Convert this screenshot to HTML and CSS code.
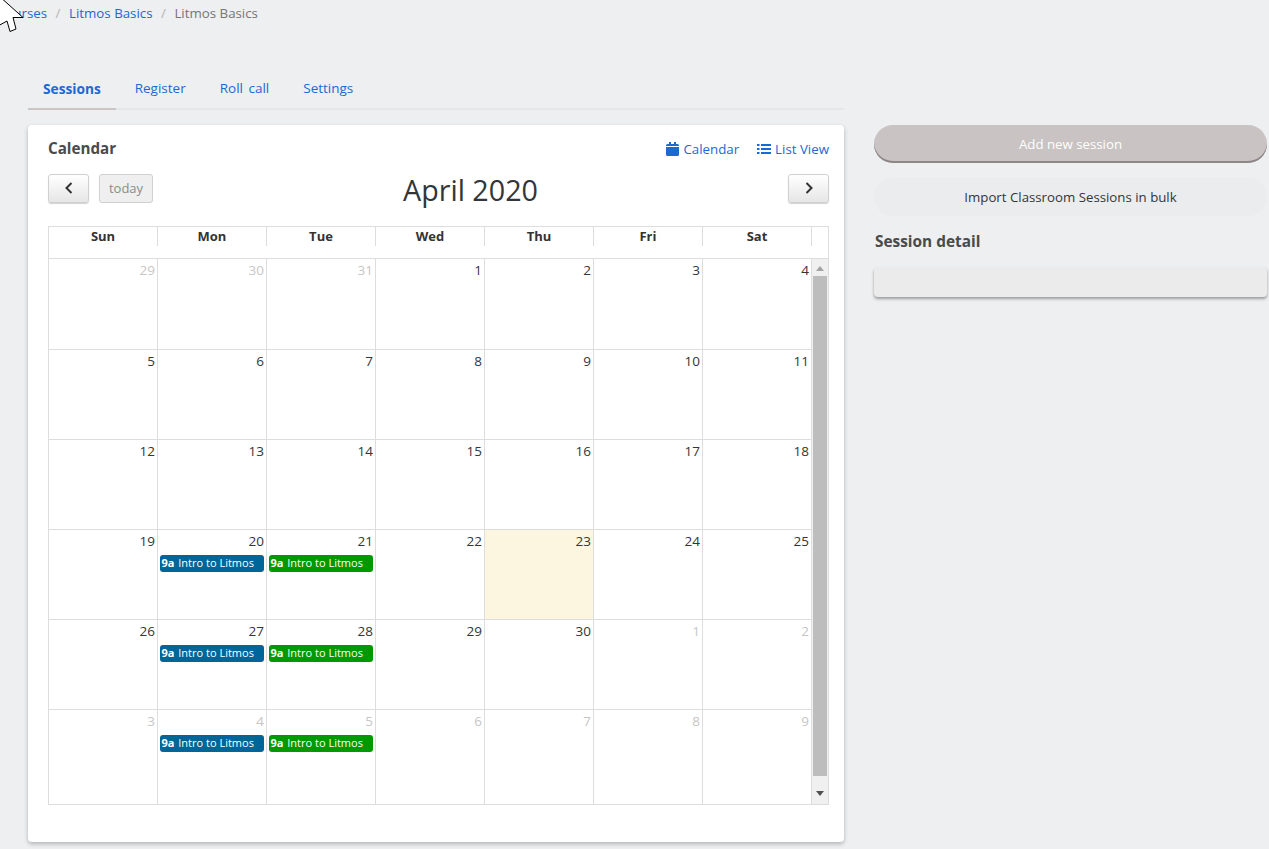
FILE: index.html
```html
<!DOCTYPE html>
<html lang="en">
<head>
<meta charset="utf-8">
<title>Litmos Basics - Sessions</title>
<link rel="stylesheet" href="styles.css">
</head>
<body>
<svg class="cursor" width="24" height="34" viewBox="0 0 24 34"><path d="M-6 -8.500 L23 17.500 L13 17.500 L16 29 L10 31.500 L7 21 L-2 26 Z" fill="#fff" stroke="#000" stroke-width="1"/></svg>
<nav class="crumbs">
  <a href="#">Courses</a><span class="sep">/</span><a href="#">Litmos Basics</a><span class="sep">/</span><span class="current">Litmos Basics</span>
</nav>
<div class="layout">
  <main class="left">
    <div class="tabs">
      <a class="tab active" href="#">Sessions</a>
      <a class="tab" href="#">Register</a>
      <a class="tab" href="#">Roll call</a>
      <a class="tab" href="#">Settings</a>
    </div>
    <section class="card">
      <div class="card-head">
        <h2>Calendar</h2>
        <div class="views">
          <a href="#"><svg width="13" height="14" viewBox="0 0 13 14"><path d="M0 5h13v7.500a1.500 1.500 0 0 1-1.500 1.500h-10A1.500 1.500 0 0 1 0 12.500zM1.500 2H3V0h2v2h3V0h2v2h1.500A1.500 1.500 0 0 1 13 3.500V4H0v-.5A1.500 1.500 0 0 1 1.500 2z" fill="#1b69d3"/></svg>Calendar</a>
          <a href="#"><svg width="14" height="12" viewBox="0 0 14 12"><path d="M0 1h2.500v2H0zM4 1h10v2H4zM0 5h2.500v2H0zM4 5h10v2H4zM0 9h2.500v2H0zM4 9h10v2H4z" fill="#1b69d3"/></svg>List View</a>
        </div>
      </div>
      <div class="toolbar">
        <div class="tool-left">
          <button class="btn nav"><svg width="10" height="12" viewBox="0 0 10 12"><path d="M7.500 1 L2.500 6 L7.500 11" fill="none" stroke="#333" stroke-width="2"/></svg></button>
          <button class="btn today">today</button>
        </div>
        <div class="month">April 2020</div>
        <button class="btn nav"><svg width="10" height="12" viewBox="0 0 10 12"><path d="M2.500 1 L7.500 6 L2.500 11" fill="none" stroke="#333" stroke-width="2"/></svg></button>
      </div>
      <div class="cal">
        <div class="dow-row">
          <div class="dow">Sun</div><div class="dow">Mon</div><div class="dow">Tue</div><div class="dow">Wed</div><div class="dow">Thu</div><div class="dow">Fri</div><div class="dow">Sat</div><div class="dow-end"></div>
        </div>
        <div class="cal-body">
          <div class="weeks">
            <div class="week">
              <div class="day off">29</div><div class="day off">30</div><div class="day off">31</div><div class="day">1</div><div class="day">2</div><div class="day">3</div><div class="day">4</div>
            </div>
            <div class="week">
              <div class="day">5</div><div class="day">6</div><div class="day">7</div><div class="day">8</div><div class="day">9</div><div class="day">10</div><div class="day">11</div>
            </div>
            <div class="week">
              <div class="day">12</div><div class="day">13</div><div class="day">14</div><div class="day">15</div><div class="day">16</div><div class="day">17</div><div class="day">18</div>
            </div>
            <div class="week">
              <div class="day">19</div>
              <div class="day">20<a class="event blue" href="#"><b>9a</b> Intro to Litmos</a></div>
              <div class="day">21<a class="event green" href="#"><b>9a</b> Intro to Litmos</a></div>
              <div class="day">22</div><div class="day now">23</div><div class="day">24</div><div class="day">25</div>
            </div>
            <div class="week">
              <div class="day">26</div>
              <div class="day">27<a class="event blue" href="#"><b>9a</b> Intro to Litmos</a></div>
              <div class="day">28<a class="event green" href="#"><b>9a</b> Intro to Litmos</a></div>
              <div class="day">29</div><div class="day">30</div><div class="day off">1</div><div class="day off">2</div>
            </div>
            <div class="week last">
              <div class="day off">3</div>
              <div class="day off">4<a class="event blue" href="#"><b>9a</b> Intro to Litmos</a></div>
              <div class="day off">5<a class="event green" href="#"><b>9a</b> Intro to Litmos</a></div>
              <div class="day off">6</div><div class="day off">7</div><div class="day off">8</div><div class="day off">9</div>
            </div>
          </div>
          <div class="scrollbar">
            <span class="arrow up"></span>
            <span class="thumb"></span>
            <span class="arrow down"></span>
          </div>
        </div>
      </div>
    </section>
  </main>
  <aside class="right">
    <button class="pill add">Add new session</button>
    <button class="pill import">Import Classroom Sessions in bulk</button>
    <h3>Session detail</h3>
    <div class="detail"></div>
  </aside>
</div>
</body>
</html>
```

FILE: styles.css
```css
* { box-sizing: border-box; }
html, body { margin: 0; height: 849px; overflow: hidden; }
body {
  position: relative;
  background: #edeff1;
  color: #32363a;
  font-family: "Open Sans", "Noto Sans", "Liberation Sans", sans-serif;
  font-size: 13px;
}
a { color: #1b69d3; text-decoration: none; }
.cursor { position: absolute; left: 0; top: 0; z-index: 5; overflow: visible; }
.crumbs { height: 72px; margin-left: -3px; padding-top: 4px; line-height: 18px; font-size: 13.300px; white-space: nowrap; }
.sep { color: #b5b5b5; margin: 0 8.500px; }
.current { color: #7a7472; }
.layout { display: flex; align-items: flex-start; padding-left: 28px; }
.left { width: 816px; flex: none; }
.tabs { display: flex; height: 38px; border-bottom: 2px solid #e5e6e8; }
.tab { height: 38px; padding: 7px 15px 0; line-height: 19px; font-size: 13.500px; word-spacing: 2px; margin-right: 4px; }
.tab.active { font-weight: 700; font-size: 13.700px; border-bottom: 2px solid #cbc5c4; }
.card {
  margin-top: 15px;
  height: 717px;
  padding: 12px 15px 0 20px;
  background: #fff;
  border-radius: 4px;
  box-shadow: 0 2px 4px rgba(0, 0, 0, .25);
}
.card-head { display: flex; justify-content: space-between; align-items: center; height: 22px; }
h2 { margin: 0; font-size: 15.200px; font-weight: 700; color: #4a4a4a; }
.views { display: flex; gap: 18px; font-size: 13.300px; padding-top: 1px; }
.views a { display: flex; align-items: center; gap: 4px; }
.toolbar { display: flex; align-items: center; justify-content: space-between; margin-top: 14px; height: 30px; position: relative; }
.tool-left { display: flex; gap: 10px; width: 105px; }
.btn {
  height: 29px;
  border: 1px solid #d0d0d0;
  border-radius: 3px;
  background: linear-gradient(#fff, #e6e6e6);
  box-shadow: 0 1px 1px rgba(0, 0, 0, .18);
  padding: 0;
  font-family: inherit;
  display: flex; align-items: center; justify-content: center;
}
.btn.nav { width: 41px; }
.btn.today { width: 54px; background: #efefef; color: #8c8c8c; font-size: 13px; box-shadow: none; }
.month { font-size: 28.700px; line-height: 34px; color: #32363a; padding-top: 3px; }
.cal { margin-top: 23px; width: 781px; border: 1px solid #ddd; height: 579px; }
.dow-row { display: flex; height: 32px; border-bottom: 1px solid #ddd; }
.dow { width: 109px; height: 19px; border-right: 1px solid #ddd; text-align: center; font-weight: 700; font-size: 13px; line-height: 19px; color: #333; }
.dow-end { flex: 1; }
.cal-body { display: flex; height: 545px; }
.weeks { width: 763px; flex: none; }
.week { display: flex; height: 90px; border-bottom: 1px solid #ddd; }
.week:first-child { height: 91px; }
.week.last { height: 94px; border-bottom: 0; }
.day { width: 109px; flex: none; border-right: 1px solid #ddd; padding: 2px 2px 0 2px; text-align: right; font-size: 13.500px; line-height: 19px; color: #32363a; }
.day.off { color: #c6c6c6; }
.day.now { background: #fcf6e0; }
.event {
  display: block;
  margin-top: 4px;
  height: 17px;
  width: 104px;
  border-radius: 3px;
  padding-left: 1.500px;
  color: #fff;
  text-align: left;
  font-size: 11px;
  line-height: 16px;
  white-space: nowrap;
  overflow: hidden;
}
.event b { margin-right: 1px; }
.event.blue { background: #006699; }
.event.green { background: #009900; }
.scrollbar { flex: 1; background: #f0f0f0; display: flex; flex-direction: column; align-items: center; padding: 0 1px; }
.thumb { width: 14px; height: 500px; background: #bdbdbd; flex: none; }
.arrow { width: 0; height: 0; flex: none; border-left: 4px solid transparent; border-right: 4px solid transparent; }
.arrow.up { margin: 7px 0 5px; border-bottom: 5px solid #a3a3a3; }
.arrow.down { margin-top: 15px; border-top: 5px solid #505050; }
.right { width: 393px; margin-left: 30px; margin-top: 53px; flex: none; }
.pill { display: block; width: 100%; height: 38px; border: 0; border-radius: 19px; font-family: inherit; font-size: 13.250px; padding: 0; }
.add { background: #c9c3c3; color: #fff; box-shadow: inset 0 -2px 0 #8c8686; padding-bottom: 1px; }
.import { margin-top: 15px; background: #ebecee; color: #32363a; }
h3 { margin: 16px 0 0; font-size: 15.400px; line-height: 19px; font-weight: 700; color: #4a4a4a; padding-left: 1px; }
.detail { margin-top: 16px; height: 30px; background: #ebebeb; border-radius: 4px; box-shadow: 0 2px 3px rgba(0, 0, 0, .35); }
```
